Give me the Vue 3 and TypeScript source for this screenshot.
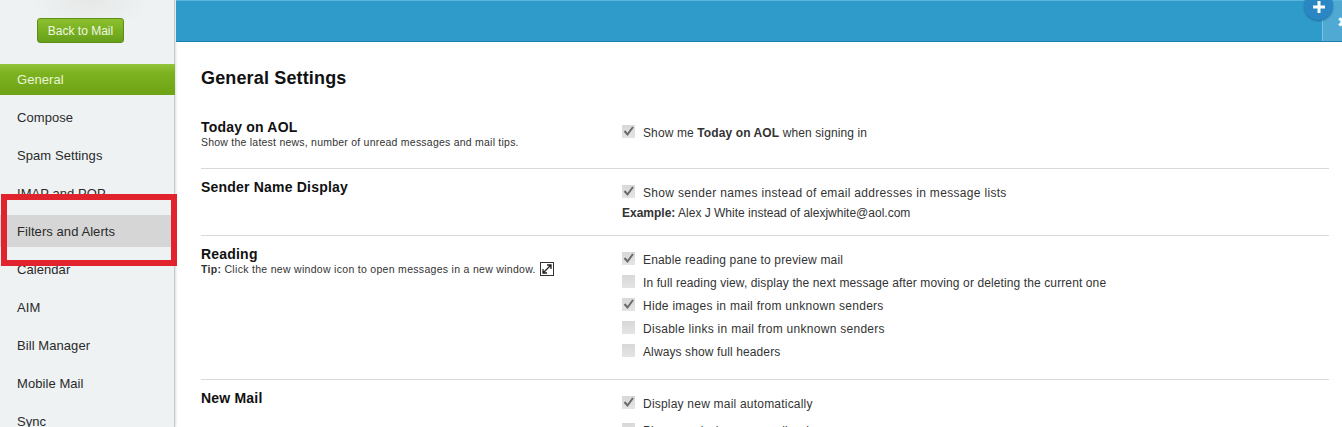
<script setup lang="ts">
const nav = ['General', 'Compose', 'Spam Settings', 'IMAP and POP', 'Filters and Alerts', 'Calendar', 'AIM', 'Bill Manager', 'Mobile Mail', 'Sync']
const navClass = (n: string) => ({ active: n === 'General', hover: n === 'Filters and Alerts' })
const reading = [
  { t: 'Enable reading pane to preview mail', c: true, w: 'w0' },
  { t: 'In full reading view, display the next message after moving or deleting the current one', c: false, w: '' },
  { t: 'Hide images in mail from unknown senders', c: true, w: 'w2' },
  { t: 'Disable links in mail from unknown senders', c: false, w: 'w2' },
  { t: 'Always show full headers', c: false, w: '' },
]
</script>

<template>
  <div class="page">
    <aside class="side">
      <div class="backwrap"><button class="back">Back to Mail</button></div>
      <nav class="nav">
        <div v-for="n in nav" :key="n" class="item" :class="navClass(n)">{{ n }}</div>
      </nav>
    </aside>
    <main class="main">
      <header class="bar">
        <div class="tab"><span class="gear">✖</span></div>
        <div class="plus"><svg width="12" height="12" viewBox="0 0 12 12"><path d="M6 0v12M0 6h12" stroke="#fff" stroke-width="3"/></svg></div>
      </header>
      <div class="content">
        <h1>General Settings</h1>
        <section class="row r1">
          <div class="l"><h2>Today on AOL</h2><p>Show the latest news, number of unread messages and mail tips.</p></div>
          <div class="r">
            <div class="opt"><span class="cb on"><svg width="13" height="13" viewBox="0 0 13 13"><path d="M2.5 6 5.5 9.5 11 2" fill="none" stroke="#6a6a6a" stroke-width="2"/></svg></span><span>Show me <b>Today on AOL</b> when signing in</span></div>
          </div>
        </section>
        <section class="row r2">
          <div class="l"><h2>Sender Name Display</h2></div>
          <div class="r">
            <div class="opt w3"><span class="cb on"><svg width="13" height="13" viewBox="0 0 13 13"><path d="M2.5 6 5.5 9.5 11 2" fill="none" stroke="#6a6a6a" stroke-width="2"/></svg></span><span>Show sender names instead of email addresses in message lists</span></div>
            <div class="ex"><b>Example:</b> Alex J White instead of alexjwhite@aol.com</div>
          </div>
        </section>
        <section class="row r3">
          <div class="l"><h2>Reading</h2><p class="tip"><b>Tip:</b> Click the new window icon to open messages in a new window. <span class="nw"><svg width="14" height="14" viewBox="0 0 14 14"><rect x=".5" y=".5" width="13" height="13" fill="#fff" stroke="#333"/><path d="M3.5 10.5 10.5 3.5M7 3h4v4M3 7v4h4" fill="none" stroke="#222" stroke-width="1.3"/></svg></span></p></div>
          <div class="r">
            <div v-for="o in reading" :key="o.t" class="opt" :class="o.w"><span class="cb" :class="{ on: o.c }"><svg v-if="o.c" width="13" height="13" viewBox="0 0 13 13"><path d="M2.5 6 5.5 9.5 11 2" fill="none" stroke="#6a6a6a" stroke-width="2"/></svg></span><span>{{ o.t }}</span></div>
          </div>
        </section>
        <section class="row r4">
          <div class="l"><h2>New Mail</h2></div>
          <div class="r">
            <div class="opt w1"><span class="cb on"><svg width="13" height="13" viewBox="0 0 13 13"><path d="M2.5 6 5.5 9.5 11 2" fill="none" stroke="#6a6a6a" stroke-width="2"/></svg></span><span>Display new mail automatically</span></div>
            <div class="opt last"><span class="cb"></span><span>Play sound when new mail arrives</span></div>
          </div>
        </section>
      </div>
    </main>
    <div class="redbox"></div>
  </div>
</template>

<style>
html, body { margin: 0; height: 427px; overflow: hidden; background: #fff; }
</style>

<style scoped>
.page { position: relative; display: flex; width: 1342px; height: 427px; overflow: hidden; font-family: "Liberation Sans", Arial, sans-serif; color: #222; }
.side { width: 175px; flex: none; background: radial-gradient(ellipse 60px 30px at 90px 0, #e6e8e6, transparent), #eef2f3; box-shadow: inset -1px 0 0 #c6cbcd, 1px 0 2px #d8dcdc; height: 427px; overflow: hidden; }
.backwrap { height: 64px; box-sizing: border-box; padding: 18px 0 0 37px; }
.back { display: block; width: 87px; height: 25px; padding: 0; border: 1px solid #5f8e17; border-radius: 3px; background: linear-gradient(#8cc02d, #66a01a); color: #f0f7e0; font: 12px "Liberation Sans", Arial, sans-serif; }
.nav { display: flex; flex-direction: column; }
.item { height: 31px; line-height: 32px; padding-left: 17px; margin-bottom: 7px; font-size: 13px; letter-spacing: .07px; color: #2a2a2a; box-sizing: border-box; }
.item.active { background: linear-gradient(#93c43a 0, #7cb11f 30%, #6ea316); color: #eaf5d5; }
.item.hover { background: #d6d6d6; height: 32px; line-height: 33px; margin-top: -1px; }
.redbox { position: absolute; left: 1px; top: 194px; width: 164px; height: 60px; border: 6px solid #e0232c; pointer-events: none; }
.main { flex: 1; min-width: 0; display: flex; flex-direction: column; margin-left: 1px; }
.bar { position: relative; flex: none; background: #2e9bcb; border-top: 1px solid #5ab5dc; border-bottom: 1px solid #1f7ea8; height: 40px; }
.tab { position: absolute; right: 0; top: 0; width: 19px; height: 40px; background: #4fa9d3; border-left: 1px solid #7fc1e0; overflow: hidden; }
.gear { position: absolute; left: 14px; top: 13px; color: #fff; font: bold 14px "DejaVu Sans", sans-serif; }
.plus { position: absolute; left: 1128px; top: -10px; width: 29px; height: 29px; border-radius: 50%; background: #2a87c4; box-shadow: 0 1px 2px #1f6f99; display: flex; align-items: center; justify-content: center; }
.plus svg { margin-top: 2px; }
.content { padding: 0 13px 0 25px; }
h1 { margin: 25px 0 0; height: 22px; line-height: 22px; font-size: 18px; letter-spacing: .15px; font-weight: bold; color: #111; }
.row { display: flex; border-bottom: 1px solid #d9d9d9; box-sizing: border-box; }
.row.r1 { margin-top: 19px; height: 61px; }
.row.r2 { height: 67px; }
.row.r3 { height: 144px; }
.row.r4 { border: none; }
.l { width: 421px; flex: none; padding-top: 10px; }
.r1 .l { padding-top: 11px; }
.r { flex: 1; padding-top: 12px; }
.r1 .r { padding-top: 13px; }
h2 { margin: 0; font-size: 14px; line-height: 16px; font-weight: bold; color: #111; letter-spacing: .2px; }
p { margin: 1px 0 0; font-size: 10.5px; line-height: 13px; color: #333; letter-spacing: .23px; }
p.tip { letter-spacing: .3px; margin-top: 0; }
.opt { display: flex; align-items: center; height: 23px; font-size: 12px; letter-spacing: .11px; color: #333; }
.opt.w0 { letter-spacing: .17px; }
.opt.w1 { letter-spacing: .21px; }
.opt.w2 { letter-spacing: .28px; }
.opt.w3 { letter-spacing: .32px; }
.opt.last { margin-top: 4px; }
.cb { width: 13px; height: 13px; flex: none; margin-right: 8px; background: linear-gradient(#d8d8d8, #e4e4e4); display: block; margin-top: -2px; }
.cb svg { display: block; }
.ex { font-size: 12px; color: #333; line-height: 16px; margin-top: 1px; }
.ex b { font-weight: bold; }
.nw { display: inline-block; vertical-align: -3px; margin-left: 1px; }
.nw svg { display: block; }
</style>
